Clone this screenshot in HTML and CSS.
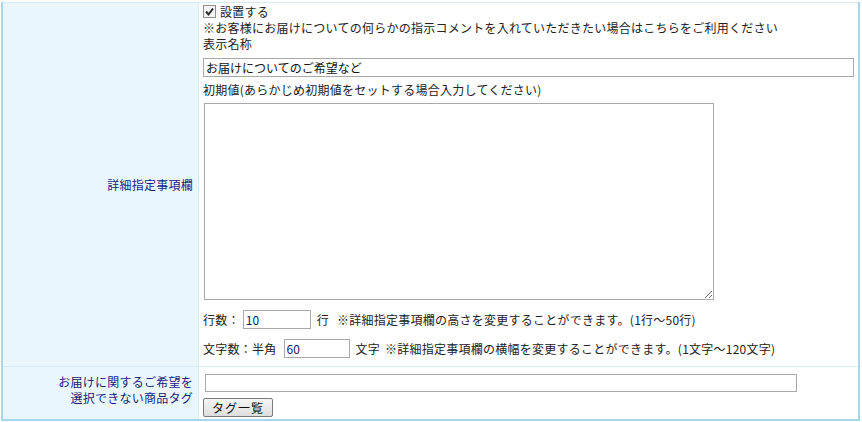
FILE: index.html
```html
<!DOCTYPE html>
<html lang="ja">
  <head>
    <meta charset="UTF-8" />
    <title>詳細指定事項欄</title>
    <link rel="stylesheet" href="styles.css">
  </head>
  <body>
    <div class="wrap">
      <table class="setting-table">
        <tr class="row-detail">
          <th>詳細指定事項欄</th>
          <td>
            <label class="line line-check">
              <span class="checkbox">
                <svg width="13" height="13" viewBox="0 0 13 13">
                  <rect x="0.5" y="0.5" width="12" height="12" fill="#f4f4f4" stroke="#8e8e8e" />
                  <path d="M3 6.5 L5.5 9.5 L10 3.5" fill="none" stroke="#2b2b2b" stroke-width="2" />
                </svg>
              </span>
              <span>設置する</span>
            </label>
            <p class="line">※お客様にお届けについての何らかの指示コメントを入れていただきたい場合はこちらをご利用ください</p>
            <p class="line">表示名称</p>
            <input class="field field-title" type="text" value="お届けについてのご希望など" />
            <p class="line line-init">初期値(あらかじめ初期値をセットする場合入力してください)</p>
            <textarea class="field field-default"></textarea>
            <div class="size-row size-rows">
              <span>行数：</span>
              <input class="field field-num field-rows" type="text" value="10" />
              <span class="unit">行</span>
              <span class="note">※詳細指定事項欄の高さを変更することができます。(1行～50行)</span>
            </div>
            <div class="size-row size-cols">
              <span>文字数：半角</span>
              <input class="field field-num field-cols" type="text" value="60" />
              <span class="unit">文字</span>
              <span class="note">※詳細指定事項欄の横幅を変更することができます。(1文字～120文字)</span>
            </div>
          </td>
        </tr>
        <tr class="row-tags">
          <th>お届けに関するご希望を<br />選択できない商品タグ</th>
          <td>
            <input class="field field-tags" type="text" />
            <button class="btn-tags" type="button">タグ一覧</button>
          </td>
        </tr>
      </table>
    </div>
  </body>
</html>
```

FILE: styles.css
```css
body {
  margin: 0;
  background: #fff;
  font-family: "Noto Sans CJK JP", "Noto Sans", sans-serif;
  font-size: 12px;
  color: #222;
}

.wrap {
  padding: 2px 0 0 1px;
}

.setting-table {
  width: 859px;
  border-collapse: collapse;
  border-left: 2px solid #a6d7ea;
  border-right: 2px solid #a6d7ea;
  border-bottom: 2px solid #a6d7ea;
  letter-spacing: 0.25px;
}

.setting-table th,
.setting-table td {
  border-top: 1px solid #d3ecf5;
  padding: 0;
}

.setting-table th {
  width: 190px;
  padding-right: 5px;
  text-align: right;
  font-weight: normal;
  color: #1b1b7e;
  line-height: 16px;
  border-right: 1px solid #d3ecf5;
  background: repeating-conic-gradient(#d6eff8 0 25%, #fbfeff 0 50%) 0 0 / 2px 2px;
}

.row-tags th {
  padding-bottom: 6px;
}

.setting-table td {
  padding-left: 4px;
  vertical-align: top;
}

.row-detail td {
  padding-top: 0;
  padding-bottom: 8px;
}

.line {
  display: block;
  margin: 0;
  line-height: 16px;
}

.line-check {
  display: flex;
  align-items: center;
  height: 17px;
}

.checkbox {
  display: flex;
  margin-right: 4px;
}

.field {
  box-sizing: border-box;
  border: 1px solid #a9a9a9;
  font-family: inherit;
  font-size: 12px;
  color: #111;
  padding: 0 2px;
  margin: 0;
  outline: none;
}

.field-title {
  display: block;
  width: 651px;
  height: 19px;
  margin-top: 6px;
}

.line-init {
  margin-top: 5px;
}

.field-default {
  display: block;
  width: 510px;
  height: 197px;
  margin: 5px 0 0 1px;
  padding: 2px;
}

.size-row {
  display: flex;
  align-items: center;
  height: 19px;
  margin-top: 10px;
}

.field-num {
  height: 19px;
  color: #1a1a66;
}

.field-rows {
  width: 68px;
  margin-left: 3px;
}

.field-cols {
  width: 66px;
  margin-left: 7px;
}

.unit {
  margin-left: 6px;
}

.size-rows .note {
  margin-left: 8px;
}

.size-cols .note {
  margin-left: 5px;
}

.row-tags td {
  padding-top: 7px;
  padding-bottom: 2px;
}

.field-tags {
  display: block;
  width: 592px;
  height: 18px;
  margin-left: 2px;
}

.btn-tags {
  display: block;
  width: 70px;
  height: 19px;
  margin-top: 6px;
  padding: 0;
  font-family: inherit;
  font-size: 12px;
  letter-spacing: 1px;
  color: #111;
  border: 1px solid #7a7a7a;
  border-radius: 2px;
  background: linear-gradient(#f6f6f6, #dedede);
}
```
